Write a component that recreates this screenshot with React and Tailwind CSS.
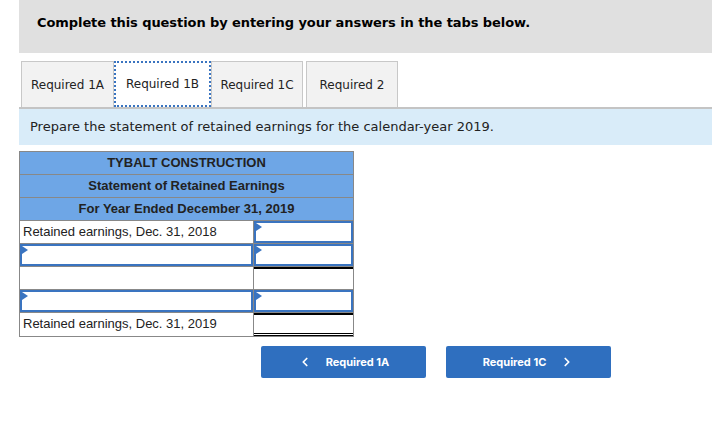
import { ChevronLeft, ChevronRight } from 'lucide-react'

function Marker() {
  return (
    <span className="absolute left-0 top-0 w-0 h-0 border-t-[4px] border-b-[4px] border-l-[6px] border-t-transparent border-b-transparent border-l-[#3a74c0]" />
  )
}

function InputCell({ className = '' }) {
  return (
    <div className={`relative h-full border-2 border-[#3a74c0] bg-white ${className}`}>
      <Marker />
    </div>
  )
}

function Row({ left, right, last }) {
  return (
    <div className={`grid grid-cols-[234px_1fr] h-[23px] ${last ? '' : 'border-b border-[#888]'}`}>
      <div className="border-r border-[#888] h-full">{left}</div>
      <div className="h-full">{right}</div>
    </div>
  )
}

const label = (t) => <div className="px-[3px] leading-[22px] text-[13px] text-[#222]">{t}</div>

export default function App() {
  return (
    <div className="w-[712px] h-[434px] bg-white pl-[19px] font-['DejaVu_Sans',sans-serif]">
      <div className="h-[53px] bg-[#e0e0e0] pl-[18px] pt-[13px]">
        <h1 className="text-[13px] font-bold text-black tracking-[-0.08px]">Complete this question by entering your answers in the tabs below.</h1>
      </div>

      <div className="mt-[8px] flex items-end pl-[2px] h-[48px] border-b-2 border-[#c4c4c4]">
        <div className="h-full w-[93px] bg-[#f2f2f2] border border-b-0 border-[#c8c8c8] flex items-center justify-center text-[12px] text-[#222]">Required 1A</div>
        <div className="h-full w-[97px] bg-white border-2 border-dotted border-[#3a74c0] flex items-center justify-center text-[12px] text-[#222]">Required 1B</div>
        <div className="h-full w-[92px] bg-[#f2f2f2] border border-b-0 border-[#c8c8c8] flex items-center justify-center text-[12px] text-[#222]">Required 1C</div>
        <div className="ml-[3px] h-full w-[92px] bg-[#f2f2f2] border border-b-0 border-[#c8c8c8] flex items-center justify-center text-[12px] text-[#222]">Required 2</div>
      </div>

      <div className="h-[36px] bg-[#d9ecf9] pl-[11px] flex items-center text-[13px] text-[#222]">
        Prepare the statement of retained earnings for the calendar-year 2019.
      </div>

      <div className="mt-[6px] w-[335px] border border-[#888] font-['Liberation_Sans',Arial,sans-serif]">
        <div className="h-[23px] bg-[#6ea6e6] border-b border-[#888] flex items-center justify-center text-[13px] font-bold text-[#222]">TYBALT CONSTRUCTION</div>
        <div className="h-[23px] bg-[#6ea6e6] border-b border-[#888] flex items-center justify-center text-[13px] font-bold text-[#222]">Statement of Retained Earnings</div>
        <div className="h-[23px] bg-[#6ea6e6] border-b border-[#888] flex items-center justify-center text-[13px] font-bold text-[#222]">For Year Ended December 31, 2019</div>
        <Row left={label('Retained earnings, Dec. 31, 2018')} right={<InputCell />} />
        <Row left={<InputCell />} right={<InputCell />} />
        <Row left={null} right={<div className="h-full border-t-2 border-black" />} />
        <Row left={<InputCell />} right={<InputCell />} />
        <Row
          last
          left={label('Retained earnings, Dec. 31, 2019')}
          right={<div className="h-full border-t-2 border-black border-b-[3px] border-b-black border-double" />}
        />
      </div>

      <div className="mt-[9px] ml-[242px] flex gap-[20px] font-['Inter',sans-serif]">
        <button className="w-[165px] h-[32px] bg-[#2f6fbf] rounded-[2px] text-white text-[11px] font-bold flex items-center justify-center gap-[14px]">
          <ChevronLeft size={14} strokeWidth={3} />
          <span>Required 1A</span>
        </button>
        <button className="w-[165px] h-[32px] bg-[#2f6fbf] rounded-[2px] text-white text-[11px] font-bold flex items-center justify-center gap-[14px]">
          <span>Required 1C</span>
          <ChevronRight size={14} strokeWidth={3} />
        </button>
      </div>
    </div>
  )
}
